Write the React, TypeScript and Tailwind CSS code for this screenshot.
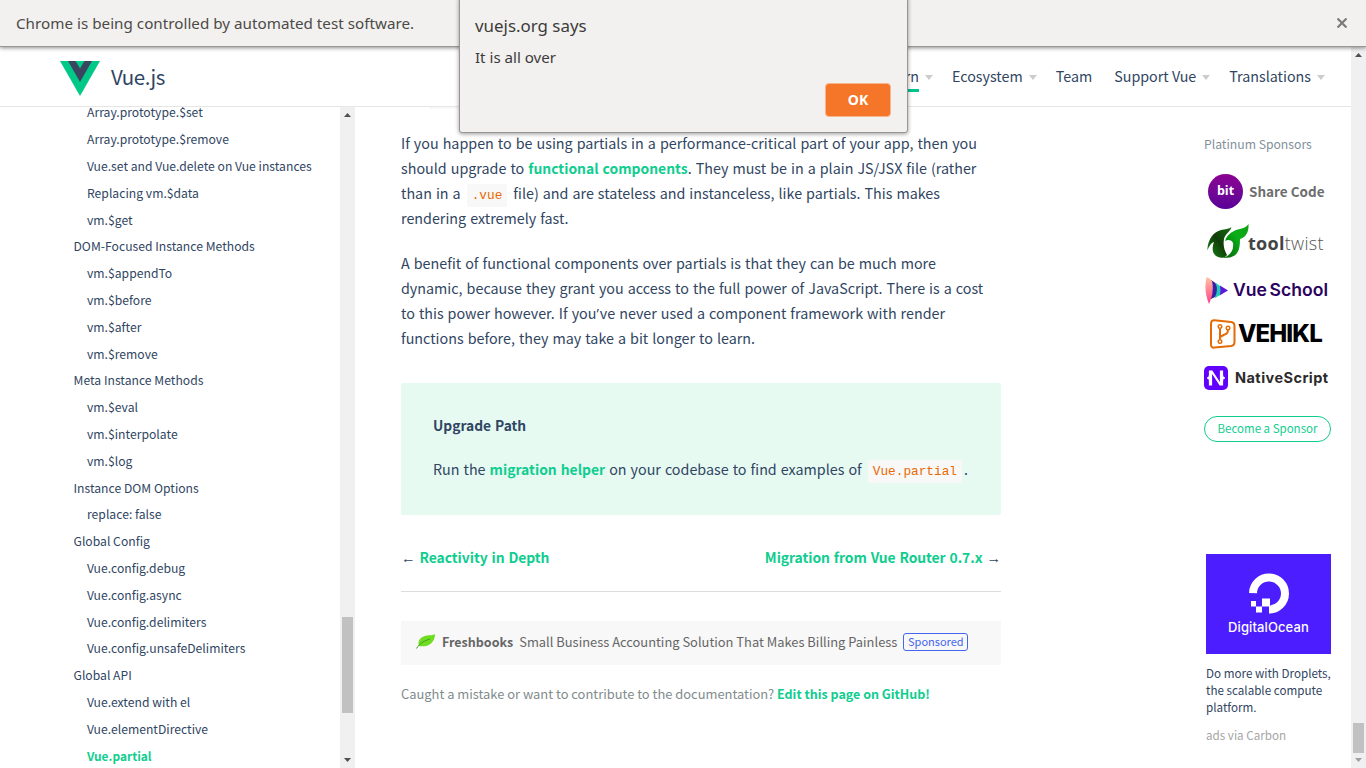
import type { ReactNode } from 'react';

const sections: { title: string; level: number; active?: boolean }[] = [
  { title: 'Array.prototype.$set', level: 2 },
  { title: 'Array.prototype.$remove', level: 2 },
  { title: 'Vue.set and Vue.delete on Vue instances', level: 2 },
  { title: 'Replacing vm.$data', level: 2 },
  { title: 'vm.$get', level: 2 },
  { title: 'DOM-Focused Instance Methods', level: 1 },
  { title: 'vm.$appendTo', level: 2 },
  { title: 'vm.$before', level: 2 },
  { title: 'vm.$after', level: 2 },
  { title: 'vm.$remove', level: 2 },
  { title: 'Meta Instance Methods', level: 1 },
  { title: 'vm.$eval', level: 2 },
  { title: 'vm.$interpolate', level: 2 },
  { title: 'vm.$log', level: 2 },
  { title: 'Instance DOM Options', level: 1 },
  { title: 'replace: false', level: 2 },
  { title: 'Global Config', level: 1 },
  { title: 'Vue.config.debug', level: 2 },
  { title: 'Vue.config.async', level: 2 },
  { title: 'Vue.config.delimiters', level: 2 },
  { title: 'Vue.config.unsafeDelimiters', level: 2 },
  { title: 'Global API', level: 1 },
  { title: 'Vue.extend with el', level: 2 },
  { title: 'Vue.elementDirective', level: 2 },
  { title: 'Vue.partial', level: 2, active: true },
];

function Caret() {
  return <span className="mt-px border-x-4 border-t-[5px] border-x-transparent border-t-[#ccc]" />;
}

function ScrollArrow({ up, muted }: { up?: boolean; muted?: boolean }) {
  return (
    <svg width="15" height="15" viewBox="0 0 15 15" className={muted ? 'fill-[#a0a0a0]' : 'fill-[#505050]'}>
      <path d={up ? 'M4 10h7L7.5 6z' : 'M4 5h7L7.5 9z'} />
    </svg>
  );
}

function InfoBar() {
  return (
    <div className="z-10 flex h-[47px] shrink-0 items-center justify-between border-b border-[#999895] bg-[#f2f1ef] pr-[19px] pl-4 font-['Noto_Sans'] text-[15.2px] whitespace-nowrap text-[#4c4a48] shadow-[0_1px_4px_rgba(0,0,0,0.45)]">
      <span className="tracking-[0.02px]">Chrome is being controlled by automated test software.</span>
      <svg width="10" height="10" viewBox="0 0 10 10" className="stroke-[#7b7b7b]" strokeWidth="2.2">
        <path d="M.5.5l9 9M9.5.5l-9 9" />
      </svg>
    </div>
  );
}

function Dialog() {
  return (
    <div className="absolute top-[-4px] left-[458.500px] z-20 flex h-[137px] w-[449px] flex-col rounded-[3px] border border-[#979694] bg-[#f2f1ef] px-[15.500px] pt-[17px] font-['Noto_Sans'] text-[#3d3b3a] shadow-[0_1px_4px_rgba(0,0,0,0.4)]">
      <h2 className="text-[16.9px] leading-6">vuejs.org says</h2>
      <p className="mt-[7px] text-[15.1px] leading-6">It is all over</p>
      <button className="mt-[14px] flex h-[34px] w-[66px] items-center justify-center self-end rounded-[4px] border border-[#f8b48c] bg-[#f57629] pb-px text-[14px] font-bold text-white">
        OK
      </button>
    </div>
  );
}

function NavItem({ children, caret = true, active }: { children: ReactNode; caret?: boolean; active?: boolean }) {
  return (
    <div className="flex h-[30px] items-center gap-[6px]">
      <span className={`h-[30px] border-b-[3px] leading-[28px] ${active ? 'border-[#00c58e]' : 'border-transparent'}`}>{children}</span>
      {caret && <Caret />}
    </div>
  );
}

function Header() {
  return (
    <header className="flex h-[60px] shrink-0 items-center justify-between border-b border-[#e6e6e6] pr-[26px] pl-[60px] text-[#304562]">
      <div className="flex items-center gap-[11px]">
        <svg width="40" height="35" viewBox="0 0 40 35" className="mt-[3px]">
          <path d="M0 0h40L20 35z" fill="#00c887" />
          <path d="M8 0h7.5L20 7.500 24.500 0H32L20 21z" fill="#3b4560" />
        </svg>
        <span className="-mt-[2px] text-[20.500px] leading-8 tracking-[-0.4px]">Vue.js</span>
      </div>
      <ul className="flex text-[14.300px] whitespace-nowrap">
        <li className="mr-[19px]"><NavItem active>Learn</NavItem></li>
        <li className="mr-[19px]"><NavItem>Ecosystem</NavItem></li>
        <li className="mr-[22px]"><NavItem caret={false}>Team</NavItem></li>
        <li className="mr-[19px]"><NavItem>Support Vue</NavItem></li>
        <li><NavItem>Translations</NavItem></li>
      </ul>
    </header>
  );
}

function Sidebar() {
  return (
    <aside className="flex h-full w-[355px] shrink-0 overflow-hidden">
      <ul className="-mt-[7.650px] w-[340px] shrink-0 text-[12.150px] tracking-[0.02px] text-[#304562]">
        {sections.map((s) => (
          <li
            key={s.title}
            className={`h-[26.800px] whitespace-nowrap ${s.level === 1 ? 'pl-[73.500px]' : 'pl-[87px]'} ${s.active ? 'text-[11.900px] leading-[28.200px] font-bold text-[#0fcd8f]' : 'leading-[26.800px]'}`}
          >
            {s.title}
          </li>
        ))}
      </ul>
      <div className="flex w-[15px] flex-col justify-between bg-[#f0f0f0]">
        <ScrollArrow up />
        <div className="mt-auto mb-[40px] h-[96px] w-[11px] self-center bg-[#c1c1c1]" />
        <ScrollArrow />
      </div>
    </aside>
  );
}

function Code({ children }: { children: ReactNode }) {
  return (
    <code className="mx-[2px] rounded-[2px] bg-[#f8f8f8] px-[5px] py-[4px] font-['Liberation_Mono'] text-[12.750px] leading-none text-[#e96900] [word-spacing:0]">
      {children}
    </code>
  );
}

function Link({ children }: { children: ReactNode }) {
  return <a className="text-[13.900px] leading-none font-bold text-[#0fcd8f]">{children}</a>;
}

function Content() {
  return (
    <main className="ml-[46px] w-[600px] shrink-0 text-[14.320px] leading-[25.120px] whitespace-nowrap text-[#304562] [word-spacing:0.82px]">
      <div className="ml-[28px] h-[2px] w-[440px] bg-[#f8f8f8]" />
      <p className="mt-[21px]">
        If you happen to be using partials in a performance-critical part of your app, then you
        <br />
        should upgrade to <Link>functional components</Link>. They must be in a plain JS/JSX file (rather
        <br />
        than in a <Code>.vue</Code> file) and are stateless and instanceless, like partials. This makes
        <br />
        rendering extremely fast.
      </p>
      <p className="mt-[19.500px]">
        A benefit of functional components over partials is that they can be much more
        <br />
        dynamic, because they grant you access to the full power of JavaScript. There is a cost
        <br />
        to this power however. If you<span className="font-['Open_Sans'] leading-none tracking-[1px]">’</span>ve never used a component framework with render
        <br />
        functions before, they may take a bit longer to learn.
      </p>
      <section className="mt-[32px] h-[132px] rounded-[2px] bg-[#e6faf2] px-8 pt-[30px]">
        <h4 className="text-[13.800px] font-bold">Upgrade Path</h4>
        <p className="mt-[18px]">
          Run the <Link>migration helper</Link> on your codebase to find examples of <Code>Vue.partial</Code>.
        </p>
      </section>
      <div className="mt-[29px] flex h-[48px] justify-between border-b border-[#ddd]">
        <span>
          <span className="font-['Liberation_Sans'] text-[14.500px] leading-none">←</span>{' '}
          <Link><span className="tracking-[-0.06px]">Reactivity in Depth</span></Link>
        </span>
        <span>
          <Link><span className="tracking-[-0.06px]">Migration from Vue Router 0.7.x</span></Link>{' '}
          <span className="font-['Liberation_Sans'] text-[14.500px] leading-none">→</span>
        </span>
      </div>
      <div className="mt-[29px] flex h-[44px] items-center bg-[#f8f8f8] pb-[2px] pl-[15px] text-[12.900px] text-[#666] [word-spacing:0]">
        <svg width="20" height="15" viewBox="0 0 20 15">
          <path d="M3 12C1 7 5 2 11 1.500c3-.2 6-.2 8-1.200 0 5-3 10.500-9 11.700-3 .5-5 .2-7 0z" fill="#6edc1f" />
          <path d="M.5 14.500C4 9 8 7 14 5" fill="none" stroke="#489b25" strokeWidth="1" />
        </svg>
        <span className="ml-[6px] text-[12.500px] font-bold">Freshbooks</span>
        <span className="ml-[6px]">Small Business Accounting Solution That Makes Billing Painless</span>
        <span className="ml-[6px] flex h-[18px] w-[65px] items-center justify-center rounded-[3px] border border-[#4466ee] text-[11px] text-[#4466ee]">
          Sponsored
        </span>
      </div>
      <p className="mt-[16px] text-[12.900px] text-[#7f8c8d] [word-spacing:0]">
        Caught a mistake or want to contribute to the documentation?{' '}
        <a className="text-[12.500px] font-bold text-[#0fcd8f]">Edit this page on GitHub!</a>
      </p>
    </main>
  );
}

function Sponsors() {
  return (
    <aside className="mt-[26px] ml-auto flex w-[127px] shrink-0 flex-col whitespace-nowrap">
      <h3 className="text-[12.200px] leading-[22px] text-[#81909b]">Platinum Sponsors</h3>
      <div className="mt-[18px] flex h-[36px] items-center pl-1">
        <span className="flex size-[35px] items-center justify-center rounded-full bg-linear-to-b from-[#8b0091] to-[#5b0098] font-['Open_Sans'] text-[12.500px] leading-none font-bold text-white">
          bit
        </span>
        <span className="ml-[6px] text-[13.500px] font-bold text-[#6d6d6d]">Share Code</span>
      </div>
      <div className="mt-[14px] flex h-[36px] items-center pl-[2px]">
        <svg width="43" height="36" viewBox="0 0 43 36" className="shrink-0">
          <defs>
            <linearGradient id="leafDark" x1="0" y1="1" x2="1" y2="0">
              <stop offset="0" stopColor="#168c17" />
              <stop offset=".5" stopColor="#113c09" />
              <stop offset="1" stopColor="#126b10" />
            </linearGradient>
            <linearGradient id="leafLight" x1="0" y1="1" x2="1" y2="0">
              <stop offset="0" stopColor="#075f09" />
              <stop offset=".6" stopColor="#0aae18" />
              <stop offset="1" stopColor="#119f13" />
            </linearGradient>
          </defs>
          <path d="M1.300 27.500C2 15 8 9 15 7c4-.6 8-1 10.500-2.700C24 9 19 11 18 16c-1 6 0 11 3 16-2 3-5 3-7 2.500-7-1.500-9-7-6-15.500-3 1-5 4-6.700 8.500z" fill="url(#leafDark)" />
          <path d="M42.500 1C43 9 40 14 34 16c0 9-1 18-13 18.800l-5 .2c8-2 12-7 11-15-1-3-5-4-8-2C21 11 28 7 34 6c5-1 7-3 8.500-5z" fill="url(#leafLight)" />
        </svg>
        <span className="-ml-px pt-[5px] font-['Open_Sans'] text-[18px] tracking-[0.3px] text-[#555]">
          <b className="font-bold text-[#444]">tool</b>
          <span className="font-light">twist</span>
        </span>
      </div>
      <div className="mt-[17px] flex h-[28px] items-center pl-px">
        <svg width="24" height="27" viewBox="0 0 24 27">
          <defs>
            <linearGradient id="sail" x1="0" y1="0" x2="0" y2="1">
              <stop offset="0" stopColor="#ffc5a3" />
              <stop offset="1" stopColor="#ff3f86" />
            </linearGradient>
          </defs>
          <path d="M15 8.500l8 5-8.500 5z" fill="#5b18dd" />
          <path d="M11 6l4 3q1 4 0 9l-5 3z" fill="#23c9b8" />
          <path d="M6 3l4.500 3q3 7-.5 14l-4 2z" fill="#3820a4" />
          <path d="M1.500 0Q5 1 7 4q2 9-1 18l-2 5Q-1.500 14 1.500 0z" fill="url(#sail)" />
        </svg>
        <span className="ml-[4px] font-['Inter'] text-[17.600px] font-semibold tracking-[0.02px] text-[#2b0260] [word-spacing:-2px]">Vue School</span>
      </div>
      <div className="mt-[14px] flex h-[32px] items-center pl-[6px]">
        <svg width="26" height="30" viewBox="0 0 26 30" fill="none" stroke="#e46b05">
          <path d="M4.500 1.200L21 3q3.500.5 3.500 4v16q0 3.500-3.500 4L4.500 28.600Q1 29 1 25.500V5Q1 1 4.500 1.200z" strokeWidth="2" />
          <path d="M10 10v10M18 11q0 4-4 4.800L10 18" strokeWidth="2" />
          <circle cx="10" cy="7.500" r="1.800" strokeWidth="1.400" />
          <circle cx="18" cy="9" r="1.800" strokeWidth="1.400" />
          <circle cx="10" cy="22.500" r="1.800" strokeWidth="1.400" />
        </svg>
        <span className="ml-[2px] font-['Inter'] text-[24px] font-extrabold tracking-[-0.9px] text-black">VEHIKL</span>
      </div>
      <div className="mt-[16px] flex h-[24px] items-center">
        <svg width="24" height="24" viewBox="0 0 24 24">
          <rect width="24" height="24" rx="5" fill="#6200ff" />
          <path d="M3 12q2.500 0 2.500-3V5H8l8.500 13V5H18.500v4q0 3 2.500 3-2.500 0-2.500 3v4H16L7.500 6v13h-2v-4q0-3-2.500-3z" fill="#fff" stroke="#fff" strokeWidth="1.200" />
        </svg>
        <span className="ml-[7px] font-['Inter'] text-[14.500px] font-bold tracking-[0.45px] text-[#2b2b2b]">NativeScript</span>
      </div>
      <a className="mt-[26px] flex h-[26px] w-[127px] items-center justify-center rounded-full border border-[#0fcd8f] text-[11.500px] text-[#0fcd8f]">
        Become a Sponsor
      </a>
      <div className="mt-[112px] ml-[2px] flex h-[100px] w-[125px] flex-col items-center bg-[#4b1dff] pt-[18px] text-white">
        <svg width="40" height="42" viewBox="0 0 40 42">
          <path d="M4 21A16 16 0 1 1 20 37.500" fill="none" stroke="#fff" strokeWidth="8" />
          <path d="M13 26.500h8v8h-8zM7 34.500h6v6H7zM2 29h5v5.500H2z" fill="#fff" />
        </svg>
        <span className="mt-[5px] font-['Inter'] text-[13px] leading-4 font-medium tracking-[0.1px]">DigitalOcean</span>
      </div>
      <p className="mt-[10px] ml-[2px] text-[11.650px] leading-[17px] text-[#304562]">
        Do more with Droplets,
        <br />
        the scalable compute
        <br />
        platform.
      </p>
      <p className="mt-[11px] ml-[2px] text-[11.650px] leading-[17px] text-[#a5a5a5]">ads via Carbon</p>
    </aside>
  );
}

export default function App() {
  return (
    <div className="relative flex h-[768px] w-[1366px] flex-col overflow-hidden bg-white font-['Noto_Sans_CJK_SC',sans-serif]">
      <InfoBar />
      <Dialog />
      <div className="flex min-h-0 flex-1">
        <div className="flex w-[1351px] flex-col">
          <Header />
          <div className="flex min-h-0 flex-1 pr-[20px]">
            <Sidebar />
            <Content />
            <Sponsors />
          </div>
        </div>
        <div className="flex w-[15px] flex-col bg-[#f0f0f0]">
          <ScrollArrow up />
          <div className="mt-auto h-[30px] w-[11px] self-center bg-[#c1c1c1]" />
          <ScrollArrow muted />
        </div>
      </div>
    </div>
  );
}
